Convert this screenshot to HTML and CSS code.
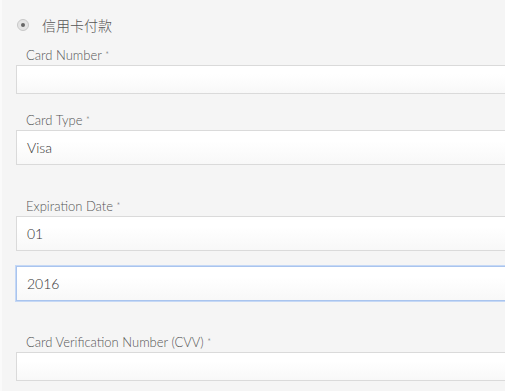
FILE: index.html
```html
<!DOCTYPE html>
<html>

<head>
    <meta charset="utf-8">
    <meta name="viewport" content="width=device-width">
    <link rel="stylesheet" href="styles.css">
</head>

<body>
    <div class="payment">
        <label class="method">
            <span class="radio"><span class="dot"></span></span>
            信用卡付款
        </label>
        <div class="field">
            <label for="cardNumber">Card Number <span class="req">*</span></label>
            <input type="text" id="cardNumber" class="text small">
        </div>
        <div class="field">
            <label for="cardType">Card Type <span class="req">*</span></label>
            <div class="text select" id="cardType">Visa</div>
        </div>
        <div class="field wide">
            <label for="expMonth">Expiration Date <span class="req">*</span></label>
            <div class="text select" id="expMonth">01</div>
            <div class="text select focus" id="expYear">2016</div>
        </div>
        <div class="field wide">
            <label for="cvv">Card Verification Number (CVV) <span class="req">*</span></label>
            <input type="text" id="cvv" class="text small">
        </div>
    </div>
</body>

</html>
```

FILE: styles.css
```css
html,
body {
    margin: 0;
    overflow: hidden;
}

body {
    font-family: Lato, "Noto Sans CJK TC", sans-serif;
    background: #f5f5f5;
    color: #444;
    height: 391px;
    border-left: 2px solid #fafafa;
}

.payment {
    display: flex;
    flex-direction: column;
    width: 540px;
    padding: 18px 0 0 14px;
}

.method {
    display: flex;
    align-items: center;
    gap: 13px;
    font-size: 14px;
    font-weight: 300;
    color: #555;
    padding-left: 1px;
    height: 14px;
    margin-bottom: 16px;
}

.radio {
    width: 10px;
    height: 10px;
    border-radius: 50%;
    border: 1px solid #c8c8c8;
    background: #e4e4e4;
    display: flex;
    align-items: center;
    justify-content: center;
}

.dot {
    width: 4px;
    height: 4px;
    border-radius: 50%;
    background: #666;
}

.field {
    display: flex;
    flex-direction: column;
    margin-bottom: 19px;
}

.field.wide {
    margin-top: 15px;
}

.field label {
    font-size: 13px;
    font-weight: 300;
    line-height: 14px;
    color: #555;
    padding-left: 10px;
    margin-bottom: 3px;
}

.req {
    font-size: 9px;
    vertical-align: top;
}

.text {
    box-sizing: border-box;
    width: 100%;
    border: 1px solid #dadada;
    background: linear-gradient(#ffffff 30%, #f8f8f8);
    font-family: inherit;
    font-size: 14px;
    font-weight: 300;
    color: #333;
    padding: 0 10px;
    margin: 0;
    outline: none;
}

.small {
    height: 29px;
}

.select {
    height: 35px;
    line-height: 33px;
}

.select + .select {
    margin-top: 15px;
}

.focus {
    border-color: #a9c4ee;
    box-shadow: 0 0 0 1px #c5d8f5;
}
```
